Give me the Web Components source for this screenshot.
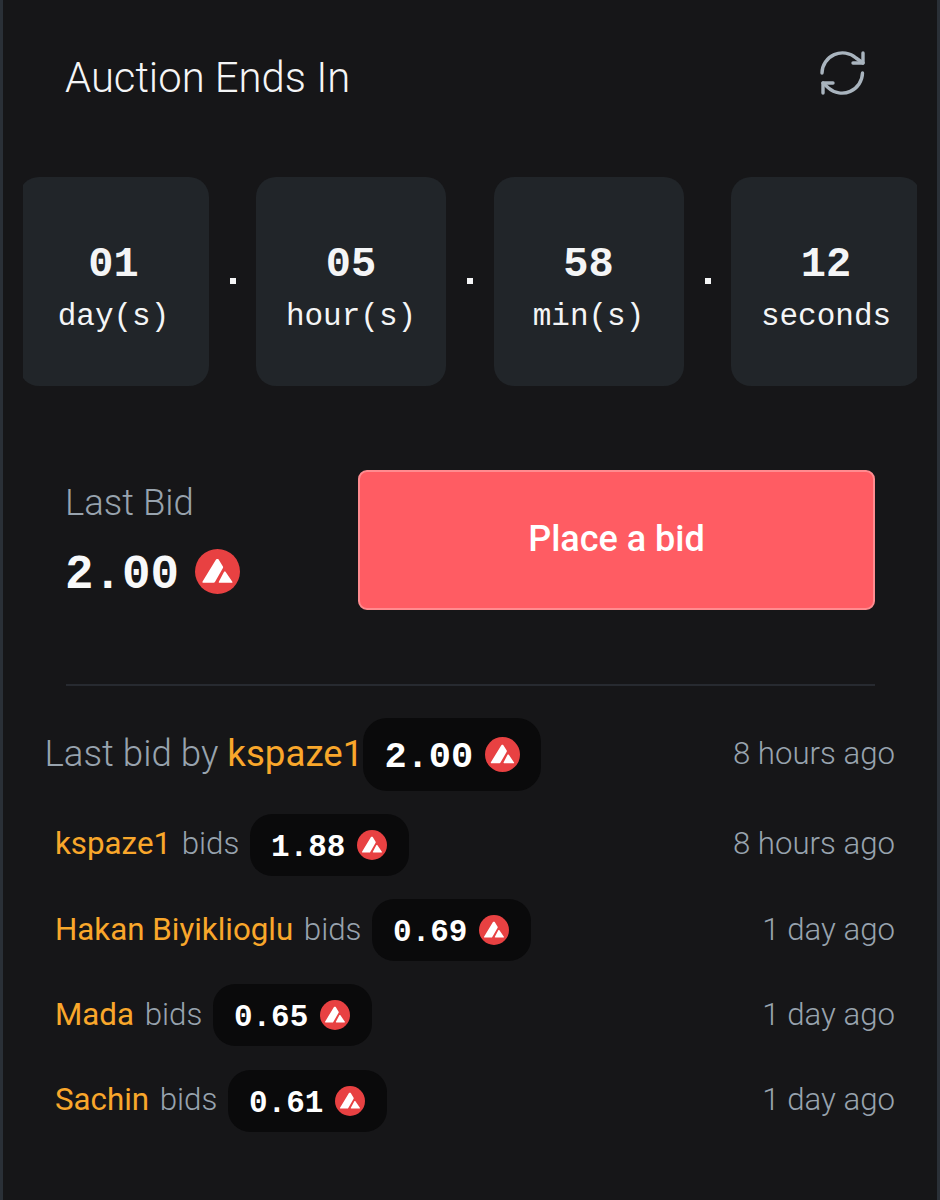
<!DOCTYPE html>
<html>
<head>
<meta charset="utf-8">
<style>
    html, body { margin: 0; background: #161618; }
    body { font-family: Roboto, sans-serif; }
</style>
</head>
<body>
<auction-panel>
    <auction-header>Auction Ends In</auction-header>
    <count-down>
        <count-box value="01" unit="day(s)"></count-box>
        <count-box value="05" unit="hour(s)"></count-box>
        <count-box value="58" unit="min(s)"></count-box>
        <count-box value="12" unit="seconds"></count-box>
    </count-down>
    <bid-action amount="2.00"></bid-action>
    <bid-row head name="kspaze1" amount="2.00" time="8 hours ago"></bid-row>
    <bid-row name="kspaze1" amount="1.88" time="8 hours ago"></bid-row>
    <bid-row name="Hakan Biyiklioglu" amount="0.69" time="1 day ago"></bid-row>
    <bid-row name="Mada" amount="0.65" time="1 day ago"></bid-row>
    <bid-row name="Sachin" amount="0.61" time="1 day ago"></bid-row>
</auction-panel>
<script>
class AvaxIcon extends HTMLElement {
    connectedCallback() {
        this.attachShadow({ mode: 'open' });
        this.shadowRoot.innerHTML = `
            <style>
                :host { display: block; width: var(--size, 34px); height: var(--size, 34px); flex: none; }
                svg { display: block; width: 100%; height: 100%; }
            </style>
            <svg viewBox="0 0 44 44">
                <circle cx="22" cy="22" r="22" fill="#e84142"/>
                <path d="M20.7 10 7.4 31.8c-.4.7.1 1.2.8 1.2h10c.6 0 1-.3 1.3-.8l7.800-13.600c.3-.5.3-1 0-1.500l-4.200-6.800c-.4-.6-1.900-.6-2.400 0z" fill="#fff"/>
                <path d="M28.3 22.4 23.300 32c-.3.5.1 1 .6 1h12c.6 0 1-.6.6-1.100l-6.500-9.500c-.4-.6-1.400-.6-1.700 0z" fill="#fff"/>
            </svg>
        `;
    }
}
customElements.define('avax-icon', AvaxIcon);

class AuctionPanel extends HTMLElement {
    connectedCallback() {
        this.attachShadow({ mode: 'open' });
        this.shadowRoot.innerHTML = `
            <style>
                :host {
                    display: block;
                    box-sizing: border-box;
                    width: 940px;
                    height: 1200px;
                    overflow: hidden;
                    background: #161618;
                    border-left: 3px solid #2a3037;
                    border-right: 3px solid #2a3037;
                    font-family: Roboto, sans-serif;
                }
            </style>
            <slot></slot>
        `;
    }
}
customElements.define('auction-panel', AuctionPanel);

class AuctionHeader extends HTMLElement {
    connectedCallback() {
        this.attachShadow({ mode: 'open' });
        this.shadowRoot.innerHTML = `
            <style>
                :host {
                    display: flex;
                    justify-content: space-between;
                    align-items: center;
                    height: 177px;
                    box-sizing: border-box;
                    padding: 0 71px 22px 62px;
                    color: #f4f5f6;
                    font-size: 41.800px;
                    font-weight: 300;
                }
                svg { display: block; width: 48px; height: 48px; margin-top: -10px; }
            </style>
            <slot></slot>
            <svg viewBox="0 0 48 48" fill="none" stroke="#a9b4be" stroke-width="3.4" stroke-linecap="round" stroke-linejoin="round">
                <path d="M4 24A20.500 20.500 0 0 1 38 9L45 14"/>
                <path d="M45 4V14H35"/>
                <path d="M44.500 24A20.500 20.500 0 0 1 10.500 39L5 34"/>
                <path d="M5 44V34H15"/>
            </svg>
        `;
    }
}
customElements.define('auction-header', AuctionHeader);

class CountDown extends HTMLElement {
    connectedCallback() {
        this.attachShadow({ mode: 'open' });
        this.shadowRoot.innerHTML = `
            <style>
                :host {
                    display: block;
                    margin-left: 20px;
                    width: 894px;
                    height: 209px;
                    overflow: hidden;
                    border-radius: 8px;
                }
                .track { display: flex; margin-left: -4.500px; gap: 47.500px; }
            </style>
            <div class="track"><slot></slot></div>
        `;
    }
}
customElements.define('count-down', CountDown);

class CountBox extends HTMLElement {
    connectedCallback() {
        const isLast = this.nextElementSibling === null;
        this.attachShadow({ mode: 'open' });
        this.shadowRoot.innerHTML = `
            <style>
                :host {
                    display: flex;
                    position: relative;
                    flex: none;
                    flex-direction: column;
                    align-items: center;
                    justify-content: center;
                    box-sizing: border-box;
                    width: 190px;
                    height: 209px;
                    padding-top: 20px;
                    background: #212529;
                    border-radius: 20px;
                    color: #f4f5f6;
                    font-family: "Liberation Mono", monospace;
                }
                .value { font-size: 42px; font-weight: 700; line-height: 50px; }
                .unit { font-size: 31px; line-height: 54px; }
                .dot {
                    position: absolute;
                    right: -27px;
                    top: 101px;
                    width: 6px;
                    height: 6px;
                    background: #f4f5f6;
                }
            </style>
            <div class="value">${this.getAttribute('value')}</div>
            <div class="unit">${this.getAttribute('unit')}</div>
            ${isLast ? '' : '<div class="dot"></div>'}
        `;
    }
}
customElements.define('count-box', CountBox);

class BidAction extends HTMLElement {
    connectedCallback() {
        this.attachShadow({ mode: 'open' });
        this.shadowRoot.innerHTML = `
            <style>
                :host {
                    display: flex;
                    justify-content: space-between;
                    align-items: flex-start;
                    margin: 84px 62px 0 63px;
                    padding-bottom: 74px;
                    border-bottom: 2px solid #272a30;
                }
                .left { margin-left: -1px; }
                .label { color: #98a3ae; font-size: 36.500px; font-weight: 300; line-height: 66px; }
                .price {
                    display: flex;
                    align-items: center;
                    gap: 16px;
                    height: 56px;
                    margin-top: 7px;
                    color: #f8f9fa;
                    font-family: "Liberation Mono", monospace;
                    font-size: 47.500px;
                    font-weight: 700;
                    line-height: 56px;
                    --size: 45px;
                }
                .price span { padding-top: 8px; }
                button {
                    box-sizing: border-box;
                    width: 517px;
                    height: 140px;
                    padding: 0 0 3px;
                    background: #ff5c63;
                    border: 2px solid #ff8b8f;
                    border-radius: 9px;
                    color: #fff;
                    font: 500 36px Roboto, sans-serif;
                }
            </style>
            <div class="left">
                <div class="label">Last Bid</div>
                <div class="price"><span>${this.getAttribute('amount')}</span><avax-icon></avax-icon></div>
            </div>
            <button>Place a bid</button>
        `;
    }
}
customElements.define('bid-action', BidAction);

class BidRow extends HTMLElement {
    connectedCallback() {
        const head = this.hasAttribute('head');
        this.attachShadow({ mode: 'open' });
        this.shadowRoot.innerHTML = `
            <style>
                :host {
                    display: flex;
                    align-items: center;
                    justify-content: space-between;
                    height: 85.400px;
                    padding: 0 42px 0 52px;
                    font-size: 31.300px;
                    font-weight: 300;
                    color: #98a3ae;
                    --size: 30px;
                }
                :host([head]) {
                    height: 73px;
                    margin: 32px 0 11px;
                    padding-left: 41.500px;
                    font-size: 36.700px;
                    --size: 35px;
                }
                .who { display: flex; align-items: center; gap: 10.600px; white-space: nowrap; }
                :host([head]) .who { gap: 0; }
                .text { margin-bottom: 2px; }
                .name { color: #f9a72b; font-weight: 400; }
                .time { font-size: 31.200px; margin-bottom: 2px; }
                .chip {
                    display: flex;
                    align-items: center;
                    gap: 12px;
                    box-sizing: border-box;
                    height: 62px;
                    padding: 0 21.500px 0 21px;
                    background: #0a0a0b;
                    border-radius: 22px;
                    color: #fff;
                    font-family: "Liberation Mono", monospace;
                    font-size: 31px;
                    font-weight: 700;
                }
                .chip span { padding-top: 5px; }
                :host([head]) .chip { height: 73px; font-size: 37px; border-radius: 24px; padding: 0 21px; }
            </style>
            <div class="who">
                <span class="text">${head ? 'Last bid by ' : ''}<span class="name">${this.getAttribute('name')}</span></span>
                ${head ? '' : '<span class="text">bids</span>'}
                <div class="chip"><span>${this.getAttribute('amount')}</span><avax-icon></avax-icon></div>
            </div>
            <div class="time">${this.getAttribute('time')}</div>
        `;
    }
}
customElements.define('bid-row', BidRow);
</script>
</body>
</html>
